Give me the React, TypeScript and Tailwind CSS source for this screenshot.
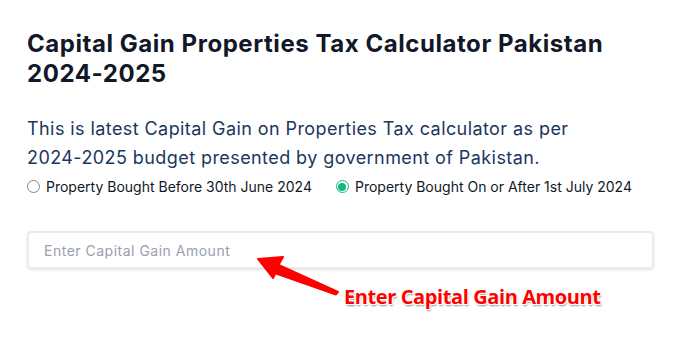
import React, { useState } from "react";

const poppins = { fontFamily: "Inter, 'Noto Sans', sans-serif" };

function Radio({ checked, label, onClick }: { checked: boolean; label: string; onClick: () => void }) {
  return (
    <label onClick={onClick} className="flex items-center gap-[6px] cursor-pointer">
      <span
        className={`flex h-[13px] w-[13px] items-center justify-center rounded-full border ${
          checked ? "border-[#10b981]" : "border-[#80858f]"
        }`}
      >
        {checked && <span className="h-[8px] w-[8px] rounded-full bg-[#10b981]" />}
      </span>
      <span className="text-[14px] text-[#111827]">{label}</span>
    </label>
  );
}

export default function App() {
  const [after, setAfter] = useState(true);
  const [amount, setAmount] = useState("");

  return (
    <div className="min-h-[342px] w-[683px] bg-white" style={poppins}>
      <div className="px-[27px] pt-[29px]">
        <h1 className="text-[24px] font-bold leading-[30px] tracking-[0.55px] text-[#111827] pr-[20px]">
          Capital Gain Properties Tax Calculator Pakistan 2024-2025
        </h1>

        <p className="mt-[25px] text-[18px] leading-[29px] tracking-[0.42px] text-[#1b365d] pr-[40px]">
          This is latest Capital Gain on Properties Tax calculator as per 2024-2025 budget presented by government of
          Pakistan.
        </p>

        <div className="mt-[4px] flex items-center gap-[24px]">
          <Radio checked={!after} label="Property Bought Before 30th June 2024" onClick={() => setAfter(false)} />
          <Radio checked={after} label="Property Bought On or After 1st July 2024" onClick={() => setAfter(true)} />
        </div>

        <div className="relative mt-[34px]">
          <input
            value={amount}
            onChange={(e) => setAmount(e.target.value)}
            placeholder="Enter Capital Gain Amount"
            className="h-[38px] w-[627px] rounded-[4px] border-2 border-[#ebebeb] px-[15px] text-[14px] tracking-[0.5px] text-[#374151] placeholder:text-[#9aa0ad] outline-none shadow-sm"
          />

          <svg className="absolute left-[223px] top-[17px]" width="100" height="60" viewBox="0 0 100 60">
            <path
              d="M8 11 L33 9 L28.6 16.8 L88 44 L86 46.5 L25.4 25.2 L23 30 Z"
              fill="#ff0000"
              stroke="#ff0000"
              strokeWidth="2"
              strokeLinejoin="round"
            />
          </svg>

          <div
            className="absolute left-[317px] top-[51px] text-[20px] font-bold tracking-[-0.4px] text-[#ff0000]"
            style={{
              fontFamily: "'Open Sans', sans-serif",
              textShadow:
                "1px 1px 0 #fff, -1px -1px 0 #fff, 1px -1px 0 #fff, -1px 1px 0 #fff, 1px 2px 2px rgba(0,0,0,0.45)",
            }}
          >
            Enter Capital Gain Amount
          </div>
        </div>
      </div>
    </div>
  );
}
